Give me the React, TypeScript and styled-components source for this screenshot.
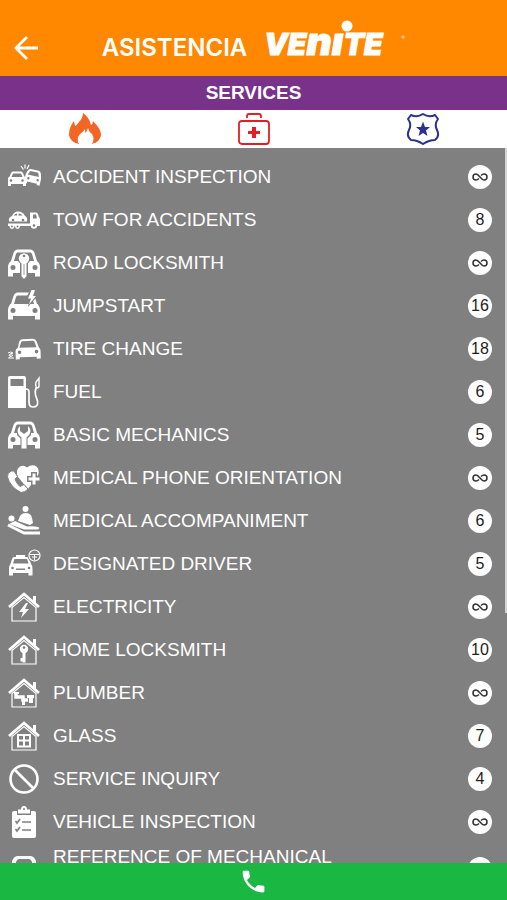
import React from "react";
import styled, { createGlobalStyle } from "styled-components";

const GlobalStyle = createGlobalStyle`
  * { box-sizing: border-box; }
  html, body, #root { height: 100%; }
  body { margin: 0; background: #808080; font-family: "Liberation Sans", Arial, sans-serif; }
  button { border: 0; padding: 0; background: none; color: inherit; font: inherit; cursor: pointer; }
`;

const Screen = styled.div`
  display: flex;
  flex-direction: column;
  height: 100vh;
  overflow: hidden;
`;

const Header = styled.header`
  flex: none;
  display: grid;
  grid-template-columns: 52px 1fr 52px;
  align-items: center;
  padding-top: 20px;
  height: 76px;
  background: #ff8800;
  color: #fff;
`;

const BackButton = styled.button`
  display: grid;
  place-items: center;
  height: 48px;
`;

const Brand = styled.h1`
  display: flex;
  justify-content: center;
  align-items: baseline;
  gap: 12px;
  margin: 0;
  padding-bottom: 10px;
  line-height: 36px;
  white-space: nowrap;
`;

const BrandLead = styled.span`
  font-family: Inter, sans-serif;
  font-size: 24px;
  font-weight: 600;
`;

const Mark = styled.svg`
  overflow: visible;
  font-family: Inter, sans-serif;
  font-size: 30px;
  font-weight: 900;
  font-style: italic;
`;

const TitleBar = styled.h2`
  flex: none;
  margin: 0;
  background: #78328a;
  color: #fff;
  font-size: 19px;
  line-height: 34px;
  font-weight: 700;
  text-align: center;
`;

const Tabs = styled.nav`
  flex: none;
  display: grid;
  grid-template-columns: repeat(3, 1fr);
  height: 38px;
  background: #fff;
`;

const Tab = styled.button`
  display: grid;
  place-items: center;
`;

const Panel = styled.main`
  position: relative;
  flex: 1;
  min-height: 0;
  overflow: hidden;
  background: #808080;
`;

const ScrollThumb = styled.div`
  position: absolute;
  top: 0;
  right: 0;
  width: 2px;
  height: 65%;
  background: #d4d4d4;
`;

const List = styled.ul`
  margin: 0;
  padding: 7px 15px 0 7px;
  list-style: none;
`;

const Row = styled.li`
  display: grid;
  grid-template-columns: 34px 1fr 24px;
  column-gap: 12px;
  align-items: center;
  min-height: 43px;
  padding: 3px 0;
  color: #fff;
`;

const Label = styled.span<{ $tall?: boolean }>`
  min-height: ${(p) => (p.$tall ? 46 : 22)}px;
  font-size: 19px;
  line-height: 22px;
`;

const Badge = styled.span`
  display: grid;
  place-items: center;
  width: 24px;
  height: 24px;
  border-radius: 50%;
  background: #fff;
  color: #222;
  font-size: 16px;
  line-height: 24px;
`;

const CallButton = styled.button`
  && { background: #1ab843; }
  flex: none;
  display: grid;
  place-items: center;
  height: 37px;
  color: #fff;
`;

const BG = "#808080";

const Glyph = ({ children }: { children: React.ReactNode }) => (
  <svg width="34" height="34" viewBox="0 0 34 34" fill="#fff" aria-hidden="true">
    {children}
  </svg>
);

const CarFront = ({ plain = false }: { plain?: boolean }) => (
  <>
    <path d="M6.500 7Q7.500 3.500 11 3.500H23Q26.500 3.500 27.500 7L30 15Q33 17 33 20V30.500H28V27H6V30.500H1V20Q1 17 4 15Z" />
    <path d="M10.500 6.500H23.500Q24.500 6.500 25 8L27 15H7L9 8Q9.500 6.500 10.500 6.500Z" fill={BG} />
    {plain && <path d="M3 15H31V19H3Z" />}
    <circle cx="6" cy="21.500" r="2.500" fill={BG} />
    <circle cx="28" cy="21.500" r="2.500" fill={BG} />
  </>
);

const House = ({ children }: { children: React.ReactNode }) => (
  <Glyph>
    <g fill="none" stroke="#fff">
      <path d="M2 17L17 4L32 17" strokeWidth="2.800" />
      <path d="M5 17.500V31H29V17.500L17 7.500Z" strokeWidth="1.200" />
    </g>
    <path d="M26 6H29V14L26 11Z" />
    {children}
  </Glyph>
);

const Key = () => (
  <>
    <circle cx="17" cy="16" r="4.200" />
    <path d="M15.500 17H18.500V29.500H15.500ZM13.500 25H16V28.500H13.500Z" />
    <circle cx="17" cy="14.500" r="1.300" fill={BG} />
  </>
);

const icons = {
  crash: (
    <Glyph>
      <path d="M3 16Q4 11.500 6 11.500H14Q16 11.500 17 16L19 18V26H16V24H4V26H1V18Z" />
      <path d="M6 13.500H14L15.500 17H4.500Z" fill={BG} />
      <g transform="rotate(12 25 18)">
        <path d="M19 12.500Q20 9.500 22 9.500H30Q32 9.500 33 12.500L34 17V24H31V22.500H21V24.500H18V16Z" />
        <path d="M22 11.500H30L31.500 15.500H20Z" fill={BG} />
        <circle cx="21.500" cy="19" r="1.200" fill={BG} /><circle cx="31" cy="19" r="1.200" fill={BG} />
      </g>
      <g fill={BG}><circle cx="4" cy="20.500" r="1.300" /><circle cx="15.500" cy="20.500" r="1.300" /></g>
      <path d="M14 6L16.500 9.500M18 4.500V8.500M22 5L20 9" stroke="#fff" strokeWidth="1.200" />
    </Glyph>
  ),
  tow: (
    <Glyph>
      <path d="M2 18Q1 14.500 5 13Q7 8.500 11 8.500Q16 8.500 18 13Q21 14 20 18.500H2ZM23 9.500H29Q31 9.500 31.500 13L33 16V23H1V20.500H23Z" />
      <path d="M6.500 12.500Q8 10.500 10 10.500V12.500ZM11.500 10.500Q14.500 10.500 15.500 12.500H11.500ZM26 11.500H29L30 15.500H26Z" fill={BG} />
      <circle cx="6" cy="17" r="1.300" fill={BG} /><circle cx="16" cy="17" r="1.300" fill={BG} />
      <circle cx="5" cy="23.500" r="2.400" /><circle cx="10.500" cy="23.500" r="2.400" /><circle cx="27" cy="22.500" r="3.200" />
      <g fill={BG}><circle cx="5" cy="23.500" r="1" /><circle cx="10.500" cy="23.500" r="1" /><circle cx="27" cy="22.500" r="1.300" /></g>
    </Glyph>
  ),
  roadKey: (
    <Glyph>
      <CarFront />
      <path d="M17 7A5.800 5.800 0 0 1 21 17.500V31L17 34L13 31V17.500A5.800 5.800 0 0 1 17 7Z" fill={BG} />
      <circle cx="17" cy="12.500" r="5.200" />
      <path d="M14.500 15H19.500V30L17 33L14.500 30Z" />
      <circle cx="17" cy="10" r="1.300" fill={BG} />
      <path d="M17 18V29" stroke={BG} strokeWidth="0.800" />
    </Glyph>
  ),
  jump: (
    <Glyph>
      <CarFront plain />
      <path d="M23 1H30L28 6.500H31L21 18L22.500 11H18Z" fill={BG} />
      <path d="M24.500 1H28L26 7H29L22 15.500L24 9.500H21Z" />
    </Glyph>
  ),
  tire: (
    <Glyph>
      <g transform="rotate(-2 20 18)">
        <path d="M12 11Q13 7 16 7H26Q29 7 30 10L32 16Q33.500 17 33.500 19V27H29.500V25H12.500V27H8.500V18.500Q8.500 17 11 15.500Z" />
        <path d="M15.500 9H26Q27.500 9 28 10.500L29.500 15.500H12.500L14 11Q14.500 9 15.500 9Z" fill={BG} />
        <circle cx="12.500" cy="20" r="1.800" fill={BG} /><circle cx="29.500" cy="20" r="1.800" fill={BG} />
      </g>
      <path d="M1 21Q4 19 6 21Q2 22 2 23.500Q5 22 6 23.500Q2 25 1.500 26H7" fill="none" stroke="#fff" strokeWidth="1" />
    </Glyph>
  ),
  fuel: (
    <Glyph>
      <path d="M1 3Q1 1 3 1H17Q19 1 19 3V33H1Z" />
      <path d="M3.500 4H16.500V11H3.500Z" fill={BG} />
      <path d="M19 14Q22 14 22 17V27Q22 32 26 32Q31.500 32 30.500 26L28.500 20Q27.500 16 29.500 12" fill="none" stroke="#fff" strokeWidth="1.700" />
      <path d="M32 3V11Q32 13 29.500 13Q28 10 29 7Z" fill="none" stroke="#fff" strokeWidth="1.400" />
    </Glyph>
  ),
  wrench: (
    <Glyph>
      <CarFront />
      <path d="M10 12V17L13.500 20.500V31H20.500V20.500L24 17V12Z" fill={BG} />
      <path d="M13 8Q9 12 11.500 16.500L14.500 19.500V30.500H19.500V19.500L22.500 16.500Q25 12 21 8V13L17 16L13 13Z" />
    </Glyph>
  ),
  heartPhone: (
    <Glyph>
      <path d="M21 28L11 16Q8 9 13 5.500Q17 3.500 20 6.500Q25 2.500 29.500 5.500Q33 9 31 14Z" />
      <path d="M24 11H30V15H34V21H30V25H24V21H20V15H24Z" fill={BG} />
      <path d="M25.500 12.500H28.500V16.500H32.500V19.500H28.500V23.500H25.500V19.500H21.500V16.500H25.500Z" />
      <path d="M4 10Q0 12 0.500 16Q3 26 14 31.500Q18 31.500 21 28L17 23.500L13 25.500Q9 22 8 18L10.500 15.500L7 10Z" stroke={BG} strokeWidth="1" />
    </Glyph>
  ),
  massage: (
    <Glyph>
      <circle cx="18.500" cy="5" r="3" /><circle cx="4.500" cy="14.500" r="3" />
      <path d="M18.500 9Q24 9 25 14L26 19L23 21L11 17L13 12Q15 9 18.500 9Z" />
      <path d="M2 20L8 17L20 22.500Q30 21.500 32.500 24L31 25.500H17Z" />
      <path d="M1 21L17 29H33" fill="none" stroke="#fff" strokeWidth="2.800" />
    </Glyph>
  ),
  driver: (
    <Glyph>
      <path d="M9 8H18V10H20Q22 10 22.500 12L24 17Q26 19 25.500 22V28.500H21.500V26H6V28.500H2V22Q1.500 19 3.500 17L5 12Q5.500 10 7 10H9Z" />
      <path d="M7.500 12H20L21.500 16.500H6Z" fill={BG} />
      <path d="M9 21.500H18V23H9Z" fill={BG} />
      <circle cx="5.500" cy="21" r="1.300" fill={BG} /><circle cx="22" cy="21" r="1.300" fill={BG} />
      <circle cx="27.500" cy="8.500" r="7" fill={BG} />
      <g fill="none" stroke="#fff"><circle cx="27.500" cy="8.500" r="5.500" strokeWidth="1.200" /><path d="M22.500 7.500H32.500M25 10H30M27.500 7.500V13.500" strokeWidth="1" /></g>
    </Glyph>
  ),
  houseBolt: <House><path d="M19 13L12 22H16L14 28L22 19H18L21 13Z" /></House>,
  houseKey: <House><Key /></House>,
  housePipe: (
    <House>
      <path d="M9 16V21H16V24H21" fill="none" stroke="#fff" strokeWidth="3.500" />
      <path d="M20 19H27V22H26V27H22V22H20ZM15 25H18V29H15ZM7 16H12V18H7Z" />
    </House>
  ),
  houseWindow: (
    <House>
      <path d="M10 15H24V28.500H10Z" />
      <path d="M12 17H16V20.500H12ZM18 17H22V20.500H18ZM12 22.500H16V26.500H12ZM18 22.500H22V26.500H18Z" fill={BG} />
    </House>
  ),
  block: (
    <Glyph>
      <g fill="none" stroke="#fff" strokeWidth="2.600"><circle cx="17" cy="17" r="13.500" /><path d="M7.500 7.500L26.500 26.500" /></g>
    </Glyph>
  ),
  checklist: (
    <Glyph>
      <path d="M7 6H10V10H24V6H27Q29 6 29 8V31Q29 33 27 33H7Q5 33 5 31V8Q5 6 7 6Z" />
      <path d="M11 4.500H14Q14 1 17 1Q20 1 20 4.500H23V8.500H11Z" />
      <circle cx="17" cy="4" r="1" fill={BG} />
      <path d="M8.500 16L10 18L13 14M8.500 24L10 26L13 22M15 17H24M15 25H24" fill="none" stroke={BG} strokeWidth="1.700" />
    </Glyph>
  ),
  mechanic: (
    <Glyph>
      <path d="M5 33V9Q7 4 11 4H23Q27 4 29 9V33Z" />
      <path d="M9 33V10Q10 7 12 7H22Q24 7 25 10V33Z" fill={BG} />
      <path d="M12 11H15V15H12ZM19 11H22V15H19Z" />
    </Glyph>
  ),
};

const services: { icon: keyof typeof icons; label: string; count?: number; tall?: boolean }[] = [
  { icon: "crash", label: "ACCIDENT INSPECTION" },
  { icon: "tow", label: "TOW FOR ACCIDENTS", count: 8 },
  { icon: "roadKey", label: "ROAD LOCKSMITH" },
  { icon: "jump", label: "JUMPSTART", count: 16 },
  { icon: "tire", label: "TIRE CHANGE", count: 18 },
  { icon: "fuel", label: "FUEL", count: 6 },
  { icon: "wrench", label: "BASIC MECHANICS", count: 5 },
  { icon: "heartPhone", label: "MEDICAL PHONE ORIENTATION" },
  { icon: "massage", label: "MEDICAL ACCOMPANIMENT", count: 6 },
  { icon: "driver", label: "DESIGNATED DRIVER", count: 5 },
  { icon: "houseBolt", label: "ELECTRICITY" },
  { icon: "houseKey", label: "HOME LOCKSMITH", count: 10 },
  { icon: "housePipe", label: "PLUMBER" },
  { icon: "houseWindow", label: "GLASS", count: 7 },
  { icon: "block", label: "SERVICE INQUIRY", count: 4 },
  { icon: "checklist", label: "VEHICLE INSPECTION" },
  { icon: "mechanic", label: "REFERENCE OF MECHANICAL", tall: true },
];

const Unlimited = () => (
  <svg width="16" height="10" viewBox="0 0 16 10" fill="none" stroke="#333" strokeWidth="1.500" role="img" aria-label="Unlimited">
    <path d="M7 6.500Q5.500 8 4 8A3 3 0 0 1 4 2Q5.500 2 8 5Q10.500 8 12 8A3 3 0 0 0 12 2Q10.500 2 9 3.500" />
  </svg>
);

const Wordmark = () => (
  <Mark width="146" height="36" viewBox="0 0 146 36" fill="#fff" role="img" aria-label="Venite">
    <text x="5" y="35" stroke="#fff" strokeWidth="1">
      VE<tspan fontSize="39">nı</tspan>TE
    </text>
    <circle cx="88" cy="6" r="5.500" />
    <circle cx="144" cy="17" r="1.200" fill="none" stroke="#fff" strokeWidth="0.600" />
  </Mark>
);

export default function App() {
  return (
    <>
      <GlobalStyle />
      <Screen>
        <Header>
          <BackButton aria-label="Back">
            <svg width="26" height="26" viewBox="0 0 26 26" fill="none" stroke="#fff" strokeWidth="2.800">
              <path d="M25 13H3M14 2L3 13L14 24" />
            </svg>
          </BackButton>
          <Brand>
            <BrandLead>ASISTENCIA</BrandLead>
            <Wordmark />
          </Brand>
        </Header>
        <TitleBar>SERVICES</TitleBar>
        <Tabs>
          <Tab aria-label="Assistance">
            <svg width="34" height="34" viewBox="0 0 34 34" fill="#f26522">
              <path d="M15 1Q21 5 23 13Q25 12 25 9Q33 17 33 23Q32 30 24 32Q27 27 24 22Q21 20 20 16Q19 18 18 21Q17 20 17 17Q15 20 12 22Q8 27 11 32Q2 30 1 23Q1 15 6 9L7 14Q9 13 11 10Q15 6 15 1Z" />
            </svg>
          </Tab>
          <Tab aria-label="Medical">
            <svg width="34" height="34" viewBox="0 0 34 34" fill="none" stroke="#e31e26" strokeWidth="1.800">
              <rect x="2" y="9" width="30" height="23" rx="3" />
              <path d="M10 6V4Q10 2 12 2H22Q24 2 24 4V6" />
              <path d="M15 15H19V19H23V22H19V26H15V22H11V19H15Z" fill="#e31e26" stroke="none" />
            </svg>
          </Tab>
          <Tab aria-label="Security">
            <svg width="34" height="34" viewBox="0 0 34 34" fill="none" stroke="#2b3190" strokeWidth="2">
              <path d="M5 3Q11 6 17 2Q23 6 29 3L32 7Q28 12 31 18Q34 24 29 28Q23 28 17 32Q11 28 5 28Q0 24 3 18Q6 12 2 7Z" strokeLinejoin="round" />
              <path d="M17 9.500L19 15H24L20 18.500L21.500 24L17 21L12.500 24L14 18.500L10 15H15Z" fill="#2b3190" stroke="none" />
            </svg>
          </Tab>
        </Tabs>
        <Panel>
          <List>
            {services.map((s) => (
              <Row key={s.label}>
                {icons[s.icon]}
                <Label $tall={s.tall}>{s.label}</Label>
                <Badge>{s.count ?? <Unlimited />}</Badge>
              </Row>
            ))}
          </List>
          <ScrollThumb />
        </Panel>
        <CallButton aria-label="Call">
          <svg width="29" height="29" viewBox="0 0 24 24" fill="currentColor">
            <path d="M6.620 10.790c1.440 2.830 3.760 5.140 6.590 6.590l2.200-2.200c.27-.27.67-.36 1.020-.24 1.120.37 2.330.57 3.570.57.550 0 1 .45 1 1V20c0 .55-.45 1-1 1-9.390 0-17-7.610-17-17 0-.55.45-1 1-1h3.500c.55 0 1 .45 1 1 0 1.250.2 2.450.57 3.570.11.35.03.74-.25 1.020l-2.200 2.200z" />
          </svg>
        </CallButton>
      </Screen>
    </>
  );
}
